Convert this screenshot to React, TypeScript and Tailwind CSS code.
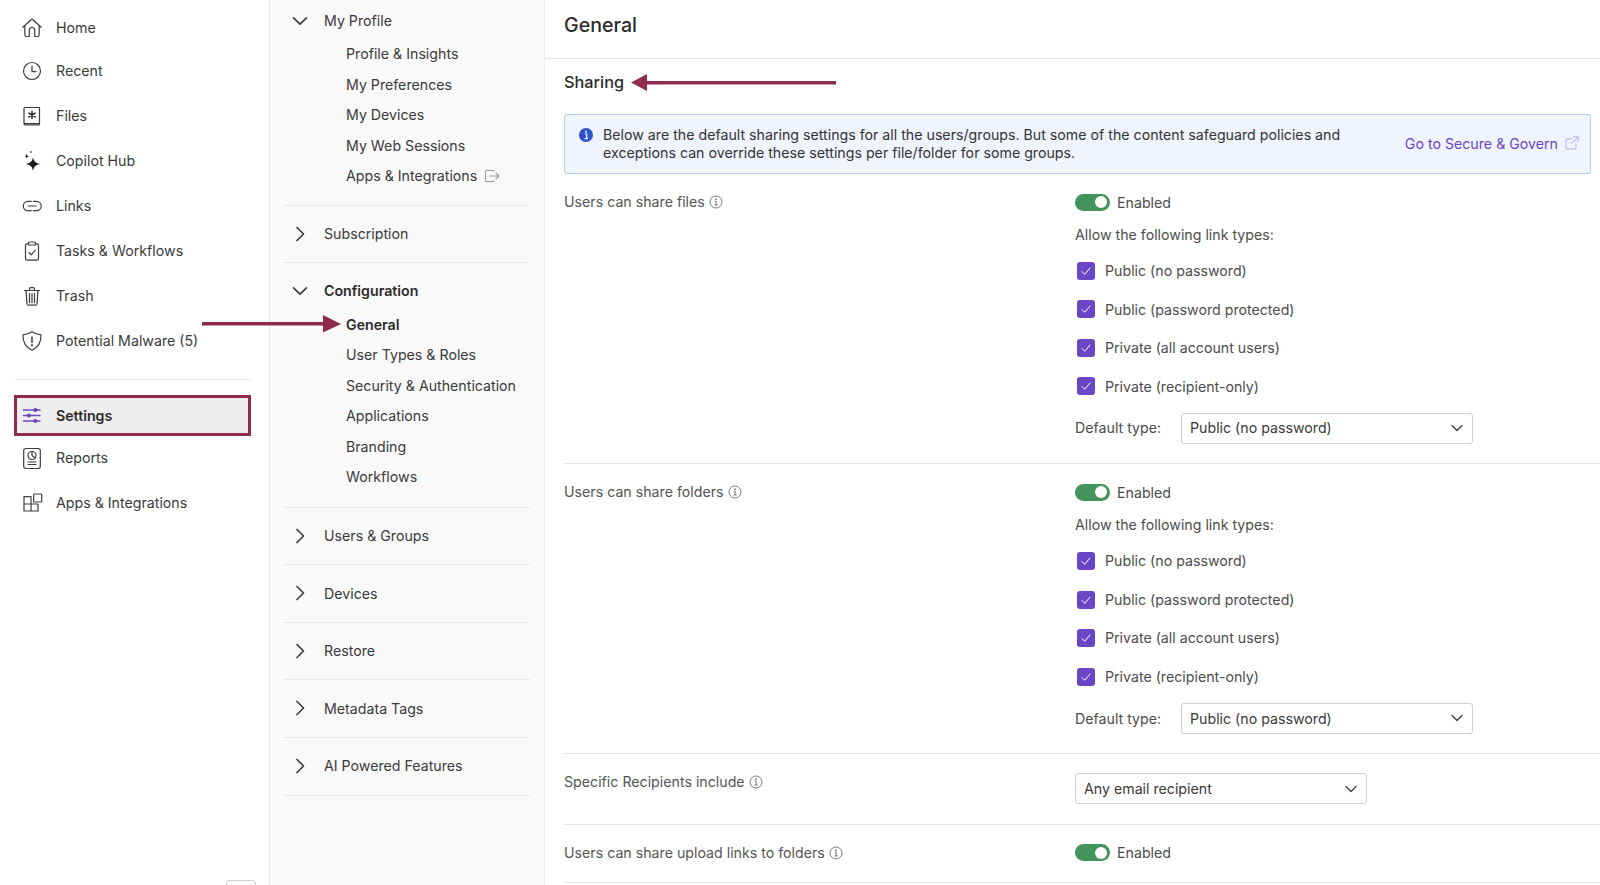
import { ReactNode } from 'react'

const stroke = { fill: 'none', stroke: '#3d3d3d', strokeWidth: 1.2, strokeLinecap: 'round', strokeLinejoin: 'round' } as const

function Icon({ children }: { children: ReactNode }) {
  return (
    <svg viewBox="0 0 20 20" className="h-5 w-5 shrink-0 overflow-visible" {...stroke}>
      {children}
    </svg>
  )
}

const navIcons: Record<string, ReactNode> = {
  home: (
    <Icon>
      <path d="M.8 9.3 10 1l9.2 8.3M2.8 7.6V17a1.500 1.500 0 0 0 1.500 1.500h3V12.200a2.700 2.700 0 0 1 5.400 0v6.300h3a1.500 1.500 0 0 0 1.500-1.500V7.600" />
    </Icon>
  ),
  recent: (
    <Icon>
      <circle cx="10" cy="10" r="8.500" />
      <path d="M10 5v5.600h4" />
    </Icon>
  ),
  files: (
    <Icon>
      <path d="M3 1.500h14.500v16H3a1 1 0 0 1-1-1v-14a1 1 0 0 1 1-1ZM2 17.500a1 1 0 0 0 1 1.300h14.500" />
      <path d="M10 5.500v7M6.800 7.200l6.400 3.600M13.200 7.200l-6.400 3.600" strokeWidth="1.500" stroke="#222" />
    </Icon>
  ),
  copilot: (
    <svg viewBox="0 0 20 20" className="h-5 w-5 shrink-0 overflow-visible" fill="#1a1a1a">
      <path d="M11 6c.7 4.300 2.300 6.200 8 7-5.700.8-7.300 2.700-8 7-.7-4.300-2.300-6.200-8-7 5.700-.8 7.300-2.700 8-7Z" />
      <path d="M4.700 2.800c.3 1.600.7 2.200 2.400 2.500-1.700.3-2.100.9-2.400 2.500-.3-1.600-.7-2.200-2.400-2.500 1.700-.3 2.100-.9 2.400-2.500ZM9 -.3c.15.800.4 1.100 1.300 1.300-.9.200-1.150.5-1.300 1.300-.15-.8-.4-1.100-1.300-1.300.9-.2 1.150-.5 1.300-1.300Z" />
    </svg>
  ),
  links: (
    <Icon>
      <path d="M9.300 5.300H6a4.700 4.700 0 0 0 0 9.400h3.300M11.200 5.300h3.300a4.700 4.700 0 0 1 0 9.400h-3.300M6.500 10h7.500" />
    </Icon>
  ),
  tasks: (
    <Icon>
      <path d="M6.500 2.800H5.200a1.700 1.700 0 0 0-1.700 1.700v13a1.700 1.700 0 0 0 1.700 1.700h9.600a1.700 1.700 0 0 0 1.700-1.700v-13a1.700 1.700 0 0 0-1.700-1.700h-1.300" />
      <path d="M6.500 2.200c0-.7.500-1.200 1.200-1.200h4.600c.7 0 1.200.5 1.200 1.200v1.800h-7Z" />
      <path d="M7 11.500l2.200 2.300 4-4.500" />
    </Icon>
  ),
  trash: (
    <Icon>
      <path d="M2.500 4.500h15M7.500 4.500V2.800c0-.7.500-1.200 1.200-1.200h2.600c.7 0 1.200.5 1.200 1.200v1.700M4 4.500l1 13.300c.1.900.7 1.400 1.500 1.400h7c.8 0 1.400-.5 1.500-1.400L16 4.500M7.500 7.500v9M10 7.500v9M12.500 7.500v9" />
    </Icon>
  ),
  malware: (
    <Icon>
      <path d="M10 .8c2.500 1.800 5 2.700 9 3 .2 6.800-1.800 12.300-9 15.400C2.800 16.100.8 10.600 1 3.800c4-.3 6.500-1.200 9-3Z" />
      <path d="M10 6v5.500" strokeWidth="1.500" />
      <circle cx="10" cy="14.300" r=".5" fill="#3d3d3d" />
    </Icon>
  ),
  settings: (
    <svg viewBox="0 0 20 20" className="h-5 w-5 shrink-0" fill="#5a35b5" stroke="#6a45c4" strokeWidth="1.400" strokeLinecap="round">
      <path d="M1.500 5h16.500M1.500 10.500h16.500M1.500 16h16.500" />
      <circle cx="13.300" cy="5" r="1.200" />
      <circle cx="7" cy="10.500" r="1.200" />
      <circle cx="13.300" cy="16" r="1.200" />
    </svg>
  ),
  reports: (
    <Icon>
      <rect x="1.700" y="0.500" width="16.600" height="20" rx="2.200" />
      <circle cx="10" cy="7.500" r="4" />
      <path d="M10 7.500V3.500M10 7.500l3 2.600M6 14h8M6 16.500h8" />
    </Icon>
  ),
  apps: (
    <Icon>
      <path d="M2 3.700h7V18H2ZM2 11h14v7H9" />
      <rect x="11.700" y="1" width="8" height="8" rx="0.600" />
    </Icon>
  ),
}

function NavRow({ icon, label, className = 'mb-[3px]' }: { icon: string; label: string; className?: string }) {
  return (
    <div className={`flex h-[42px] items-center gap-[14px] pl-[22px] text-[#3a3a3a] ${className}`}>
      {navIcons[icon]}
      <span>{label}</span>
    </div>
  )
}

function Chevron({ open }: { open?: boolean }) {
  return (
    <svg viewBox="0 0 16 16" className="h-4 w-4 shrink-0" fill="none" stroke="#3d3d3d" strokeWidth="1.700" strokeLinecap="round" strokeLinejoin="round">
      <path d={open ? 'M1.500 4.800 8 11.200l6.500-6.400' : 'M5 1.500 11.500 8 5 14.500'} />
    </svg>
  )
}

function Section({ title, items, active, strong, first, extra }: { title: string; items?: string[]; active?: string; strong?: boolean; first?: boolean; extra?: string }) {
  const open = !!items
  const pad = first ? 'pt-[2.5px]' : 'pt-[10px]'
  const bottom = first ? 'pb-[13.5px]' : open ? 'pb-[14.5px]' : 'pb-[10.6px]'
  return (
    <div className={`border-b border-[#e6e6e6] ${pad} ${bottom}`}>
      <div className={`flex h-[36px] items-center pl-[9px] ${strong ? 'font-semibold text-[#2b2b2b]' : 'text-[#3a3a3a]'}`}>
        <Chevron open={open} />
        <span className="ml-[16px]">{title}</span>
      </div>
      {items?.map((item) => (
        <div key={item} className={`flex h-[30.5px] items-center pl-[63px] ${item === active ? 'font-semibold text-[#2b2b2b]' : 'text-[#3a3a3a]'}`}>
          <span>{item}</span>
          {item === extra && (
            <svg viewBox="0 0 16 16" className="ml-[7px] h-4 w-4" fill="none" stroke="#9a9a9a" strokeWidth="1.100" strokeLinecap="round" strokeLinejoin="round">
              <path d="M9.500 3V2.500H2.500a1 1 0 0 0-1 1v9a1 1 0 0 0 1 1h7V13M5.500 8h9.500M12 5l3 3-3 3" />
            </svg>
          )}
        </div>
      ))}
    </div>
  )
}

function InfoTip() {
  return (
    <svg viewBox="0 0 14 14" className="ml-[4px] inline-block h-[14px] w-[14px] shrink-0" fill="none" stroke="#6b6b6b" strokeWidth="0.900">
      <circle cx="7" cy="7" r="6" />
      <path d="M5.700 6.200H7.200V10M5.500 10H8.800" />
      <circle cx="7" cy="4.200" r=".5" fill="#6b6b6b" />
    </svg>
  )
}

function Toggle() {
  return (
    <div className="flex items-center gap-[7px]">
      <div className="flex h-[17px] w-[35px] items-center justify-end rounded-full bg-[#43945a] pr-[3px]">
        <div className="h-[12px] w-[12px] rounded-full bg-white" />
      </div>
      <span className="leading-[17px] text-[#4c4c4c]">Enabled</span>
    </div>
  )
}

function Check({ label }: { label: string }) {
  return (
    <div className="flex h-[38.5px] items-center pl-[2px] text-[#4c4c4c]">
      <div className="flex h-[18px] w-[18px] items-center justify-center rounded-[3px] bg-[#6a45c4]">
        <svg viewBox="0 0 12 12" className="h-3 w-3" fill="none" stroke="#fff" strokeWidth="1" strokeLinecap="round" strokeLinejoin="round">
          <path d="M2 6.500 4.700 9.300 10 3" />
        </svg>
      </div>
      <span className="ml-[10px]">{label}</span>
    </div>
  )
}

function Select({ value }: { value: string }) {
  return (
    <div className="flex h-[31px] w-[292px] items-center justify-between rounded-[3px] border border-[#cfcfcf] bg-white pr-[9px] pl-[8px] text-[#3a3a3a]">
      <span>{value}</span>
      <svg viewBox="0 0 12 12" className="h-3 w-3" fill="none" stroke="#3d3d3d" strokeWidth="1.300" strokeLinecap="round" strokeLinejoin="round">
        <path d="M1 3.500 6 8.500l5-5" />
      </svg>
    </div>
  )
}

function ShareRow({ label }: { label: string }) {
  return (
    <div className="flex border-b border-[#e6e6e6] pb-[19.300px]">
      <div className="flex w-[511px] items-center self-start pt-[18px] leading-[20px] text-[#555]">
        {label}
        <InfoTip />
      </div>
      <div className="pt-[20px]">
        <Toggle />
        <div className="mt-[14px] leading-[20px] text-[#4c4c4c]">Allow the following link types:</div>
        <div className="mt-[7px]">
          <Check label="Public (no password)" />
          <Check label="Public (password protected)" />
          <Check label="Private (all account users)" />
          <Check label="Private (recipient-only)" />
        </div>
        <div className="mt-[7px] flex items-center">
          <span className="w-[106px] text-[#4c4c4c]">Default type:</span>
          <Select value="Public (no password)" />
        </div>
      </div>
    </div>
  )
}

export default function App() {
  return (
    <div className="relative flex h-[885px] w-[1600px] overflow-hidden bg-white font-['Inter',sans-serif] text-[14.200px]">
      <aside className="relative w-[270px] shrink-0 border-r border-[#e6e6e6] pt-[7px]">
        <NavRow icon="home" label="Home" className="mb-[0.7px]" />
        <NavRow icon="recent" label="Recent" />
        <NavRow icon="files" label="Files" />
        <NavRow icon="copilot" label="Copilot Hub" />
        <NavRow icon="links" label="Links" />
        <NavRow icon="tasks" label="Tasks & Workflows" />
        <NavRow icon="trash" label="Trash" />
        <NavRow icon="malware" label="Potential Malware (5)" className="" />
        <div className="mx-[15px] mt-[17.300px] h-px w-[236px] bg-[#e6e6e6]" />
        <div className="mt-[15px] ml-[14px] flex h-[41px] w-[237px] items-center gap-[14px] border-[3px] border-[#8e2c50] bg-[#eeeeee] pl-[5px] font-semibold text-[#2b2b2b]">
          {navIcons.settings}
          <span>Settings</span>
        </div>
        <NavRow icon="reports" label="Reports" className="mt-px mb-[3px]" />
        <NavRow icon="apps" label="Apps & Integrations" className="" />
        <div className="absolute top-[880px] left-[226px] h-[12px] w-[30px] rounded-t-[3px] border border-[#cfcfcf]" />
      </aside>

      <nav className="w-[275px] shrink-0 border-r border-[#eeeeee] bg-[#f9f9f9] pr-[14px] pl-[13px]">
        <Section first title="My Profile" items={['Profile & Insights', 'My Preferences', 'My Devices', 'My Web Sessions', 'Apps & Integrations']} extra="Apps & Integrations" />
        <Section title="Subscription" />
        <Section strong title="Configuration" active="General" items={['General', 'User Types & Roles', 'Security & Authentication', 'Applications', 'Branding', 'Workflows']} />
        <Section title="Users & Groups" />
        <Section title="Devices" />
        <Section title="Restore" />
        <Section title="Metadata Tags" />
        <Section title="AI Powered Features" />
      </nav>

      <main className="min-w-0 flex-1">
        <header className="flex h-[59px] items-center border-b border-[#e6e6e6] pb-[7px] pl-[19px] text-[19.600px] font-medium text-[#2b2b2b]">General</header>
        <div className="pl-[19px]">
          <div className="h-[54.500px] pt-[12px] text-[16.300px] leading-[22px] font-medium text-[#2b2b2b]">Sharing</div>
          <div className="mr-[9px] flex h-[60px] items-center justify-between rounded-[3px] border border-[#b4cdf6] bg-[#eff4fe] pr-[11px] pl-[14px]">
            <div className="flex items-start">
              <svg viewBox="0 0 14 14" className="mt-[2px] h-[14px] w-[14px] shrink-0">
                <circle cx="7" cy="7" r="7" fill="#2b52d0" />
                <circle cx="7" cy="3.800" r="1" fill="#fff" />
                <path d="M5.800 6h1.900v4.600M5.600 10.600h3.400" fill="none" stroke="#fff" strokeWidth="1.200" />
              </svg>
              <p className="ml-[10px] w-[760px] leading-[18px] text-[#333]">
                Below are the default sharing settings for all the users/groups. But some of the content safeguard policies and exceptions can override these settings per file/folder for some groups.
              </p>
            </div>
            <div className="flex items-center text-[#6a45c4]">
              <span>Go to Secure & Govern</span>
              <svg viewBox="0 0 14 14" className="ml-[7px] h-[14px] w-[14px]" fill="none" stroke="#b7a5e6" strokeWidth="1" strokeLinecap="round" strokeLinejoin="round">
                <path d="M11 8v4a1 1 0 0 1-1 1H2a1 1 0 0 1-1-1V4a1 1 0 0 1 1-1h4.500M8.500 1H13v4.500M13 1 6.500 7.500" />
              </svg>
            </div>
          </div>
          <ShareRow label="Users can share files" />
          <ShareRow label="Users can share folders" />
          <div className="flex border-b border-[#e6e6e6] pb-[19.500px]">
            <div className="flex w-[511px] items-center self-start pt-[17.500px] leading-[20px] text-[#555]">
              Specific Recipients include
              <InfoTip />
            </div>
            <div className="pt-[19px]">
              <Select value="Any email recipient" />
            </div>
          </div>
          <div className="flex border-b border-[#e6e6e6] pb-[19.500px]">
            <div className="flex w-[511px] items-center self-start pt-[18px] leading-[20px] text-[#555]">
              Users can share upload links to folders
              <InfoTip />
            </div>
            <div className="pt-[19.500px]">
              <Toggle />
            </div>
          </div>
        </div>
      </main>

      {/* annotation arrows drawn over the screenshot */}
      <svg className="pointer-events-none absolute top-[314px] left-[202px] h-[20px] w-[140px]" viewBox="0 0 140 20" fill="#8e2c50">
        <path d="M0 8h122v3.500H0Z" />
        <path d="M121 1l18 9-18 8.500Z" />
      </svg>
      <svg className="pointer-events-none absolute top-[73px] left-[630px] h-[20px] w-[208px]" viewBox="0 0 208 20" fill="#8e2c50">
        <path d="M16 8h190v3.500H16Z" />
        <path d="M1 9.500 17 1v17Z" />
      </svg>
    </div>
  )
}
